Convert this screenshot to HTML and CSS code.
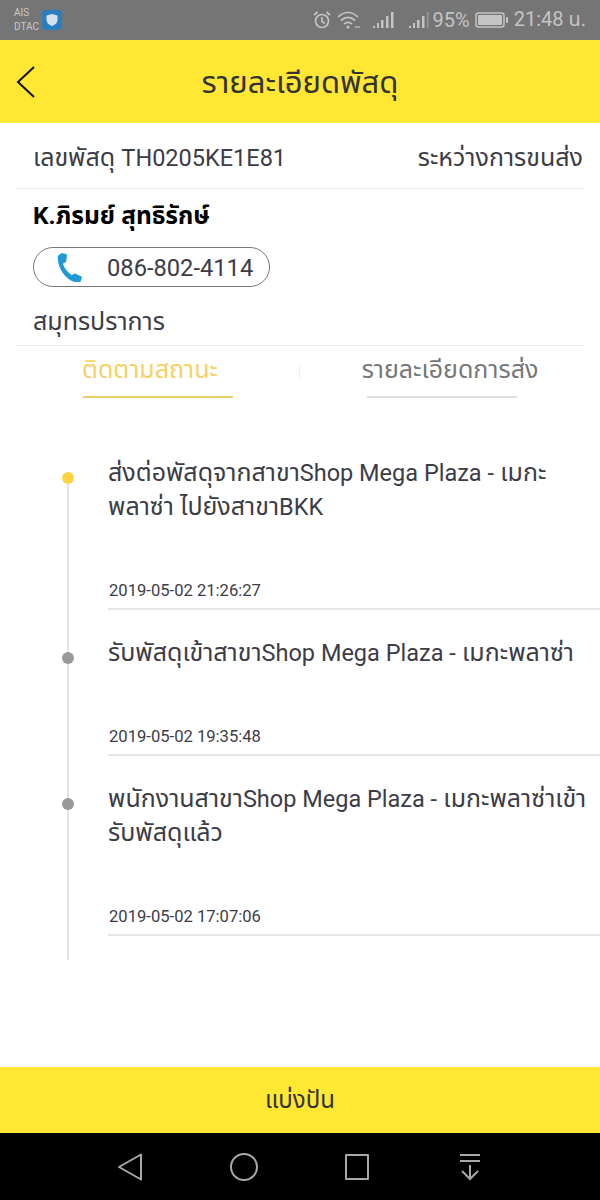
FILE: index.html
```html
<!DOCTYPE html>
<html lang="th">
<head>
<meta charset="utf-8">
<title>รายละเอียดพัสดุ</title>
<link rel="stylesheet" href="styles.css">
</head>
<body>
<div class="page">
  <div class="status">
    <div class="carriers"><span>AIS</span><span>DTAC</span></div>
    <svg class="shield" width="20" height="20" viewBox="0 0 20 20"><rect width="20" height="20" rx="4" fill="#2b7fc0"/><path d="M10 4l5.500 1.500v4.500c0 3-2.500 5-5.500 6-3-1-5.500-3-5.500-6V5.500z" fill="#d5e2ee"/></svg>
    <div class="status-right">
      <svg width="20" height="20" viewBox="0 0 20 20" fill="none" stroke="#c4c4c4" stroke-width="1.700"><circle cx="10" cy="11" r="6.500"/><path d="M10 7v4.500l3 2M2 5l3.500-3M18 5l-3.500-3"/></svg>
      <svg class="wifi" width="24" height="20" viewBox="0 0 24 20" fill="none" stroke="#c4c4c4" stroke-width="1.700"><path d="M1 7c6-6 14-6 20 0M4 10.500c4.500-4 9.500-4 14 0M7 14c2.500-2 5.500-2 8 0"/><circle cx="11" cy="17" r="1.500" fill="#c4c4c4" stroke="none"/><path d="M18 17h5" stroke-width="1.200"/></svg>
      <svg class="sig1" width="21" height="20" viewBox="0 0 21 20" fill="#c4c4c4"><rect x="0" y="16" width="2" height="2"/><rect x="4" y="13" width="2" height="5"/><rect x="8" y="10" width="2.500" height="8"/><rect x="13" y="6" width="2.500" height="12"/><rect x="18" y="2" width="2.500" height="16"/></svg>
      <svg class="sig2" width="20" height="20" viewBox="0 0 20 20" fill="#c4c4c4"><rect x="0" y="16" width="2" height="2"/><rect x="4" y="13" width="2" height="5"/><rect x="8" y="10" width="2.500" height="8"/><rect x="13" y="6" width="2.500" height="12"/><rect x="18" y="2" width="1.500" height="16" fill="#999"/></svg>
      <span class="pct">95%</span>
      <svg class="batt" width="34" height="18" viewBox="0 0 34 18"><rect x="1" y="2" width="28" height="14" rx="2.500" fill="none" stroke="#c4c4c4" stroke-width="1.500"/><rect x="3" y="4" width="24" height="10" rx="1" fill="#c4c4c4"/><rect x="31" y="6" width="2" height="6" rx="1" fill="#c4c4c4"/></svg>
      <span class="clock">21:48 น.</span>
    </div>
  </div>

  <header class="topbar">
    <svg class="back" width="20" height="32" viewBox="0 0 20 32" fill="none" stroke="#111" stroke-width="2"><path d="M18 1L2 16l16 15"/></svg>
    <h1 class="title">รายละเอียดพัสดุ</h1>
  </header>

  <main class="content">
    <div class="parcel-row">
      <span>เลขพัสดุ <span class="lat">TH0205KE1E81</span></span>
      <span>ระหว่างการขนส่ง</span>
    </div>
    <div class="receiver">
      <div class="name">K.ภิรมย์ สุทธิรักษ์</div>
      <div class="phone">
        <svg width="27" height="29" viewBox="3.500 1.500 18.500 21" fill="#1f9ad6"><path d="M6.500 1.500l3 .8c.5.200.8.600.7 1.100l-.6 4.200c-.1.400-.3.700-.7.800l-1.700.9c1 3 3.500 6.300 6.500 8.300l1.700-1.100c.3-.2.700-.2 1 0l4 1.900c.5.200.7.700.6 1.200l-.9 2.500c-.3.700-1 1.100-1.800 1C10.500 22.300 3.500 13.500 3.500 4.700c0-.8.400-1.500 1.100-1.900z"/></svg>
        <span class="phone-num">086-802-4114</span>
      </div>
      <div class="province">สมุทรปราการ</div>
    </div>
    <div class="tabs">
      <div class="tab tab-active"><span class="tab-label">ติดตามสถานะ</span></div>
      <div class="tab tab-idle"><span class="tab-label">รายละเอียดการส่ง</span></div>
    </div>
    <div class="timeline">
      <div class="item">
        <i class="dot dot-active"></i>
        <p class="desc">ส่งต่อพัสดุจากสาขา<span class="lat">Shop Mega Plaza -</span> เมกะ<br>พลาซ่า ไปยังสาขา<span class="lat">BKK</span></p>
        <time class="when">2019-05-02 21:26:27</time>
      </div>
      <div class="item">
        <i class="dot"></i>
        <p class="desc">รับพัสดุเข้าสาขา<span class="lat">Shop Mega Plaza -</span> เมกะพลาซ่า</p>
        <time class="when">2019-05-02 19:35:48</time>
      </div>
      <div class="item">
        <i class="dot"></i>
        <p class="desc">พนักงานสาขา<span class="lat">Shop Mega Plaza -</span> เมกะพลาซ่าเข้า<br>รับพัสดุแล้ว</p>
        <time class="when">2019-05-02 17:07:06</time>
      </div>
    </div>
  </main>

  <div class="share">แบ่งปัน</div>

  <nav class="navbar">
    <svg width="26" height="28" viewBox="0 0 26 28" fill="none" stroke="#a8a8a8" stroke-width="2" stroke-linejoin="round"><path d="M24 1.500v25L2 14z"/></svg>
    <svg width="28" height="28" viewBox="0 0 28 28" fill="none" stroke="#a8a8a8" stroke-width="2"><circle cx="14" cy="14" r="13"/></svg>
    <svg width="26" height="28" viewBox="0 0 26 28" fill="none" stroke="#a8a8a8" stroke-width="2" stroke-linejoin="round"><rect x="1" y="2" width="22" height="24"/></svg>
    <svg width="24" height="28" viewBox="0 0 24 28" fill="none" stroke="#a8a8a8" stroke-width="2"><path d="M2 2h20M2 8h20M12 12v14M4 18l8 8 8-8"/></svg>
  </nav>
</div>
</body>
</html>
```
FILE: styles.css
```css
* { box-sizing: border-box; }
html, body { margin: 0; padding: 0; }
body { font-family: Roboto, "Noto Sans Thai", "Noto Sans", "DejaVu Sans", sans-serif; background: #fff; }
.page { width: 600px; height: 1200px; display: flex; flex-direction: column; overflow: hidden; }
.lat { font-size: 23.500px; }

.status { height: 40px; background: #757575; display: flex; align-items: center; padding-left: 14px; color: #c4c4c4; }
.carriers { display: flex; flex-direction: column; font-size: 10px; line-height: 14px; width: 28px; color: #c9c9c9; }
.shield { margin-top: -1px; }
.status-right { margin-left: auto; display: flex; align-items: center; padding-right: 14px; }
.wifi { margin-left: 5px; }
.sig1 { margin-left: 12px; }
.sig2 { margin-left: 15px; }
.pct { font-size: 20px; margin-left: 4px; }
.batt { margin-left: 5px; }
.clock { font-size: 20px; margin-left: 5px; }

.topbar { height: 83px; background: #ffe733; display: flex; align-items: center; justify-content: center; position: relative; margin-bottom: 1px; padding-top: 3px; }
.back { position: absolute; left: 16px; top: 26px; }
.title { margin: 0; font-size: 31px; font-weight: 400; color: #333; }

.content { flex: 1; }
.parcel-row { margin: 0 16px; height: 65px; padding: 3px 1px 0 17px; border-bottom: 1px solid #eee; display: flex; justify-content: space-between; align-items: center; font-size: 25px; color: #3c3c46; }
.receiver { margin: 0 16px; padding: 0 0 0 17px; height: 157px; border-bottom: 1px solid #eee; display: flex; flex-direction: column; align-items: flex-start; }
.name { font-size: 24.500px; font-weight: 700; color: #000; height: 58px; line-height: 54px; }
.phone { width: 237px; height: 40px; border: 1px solid #777; border-radius: 20px; display: flex; align-items: center; padding-left: 23px; gap: 23px; font-size: 23.700px; color: #3c3c46; }
.phone-num { padding-top: 2px; }
.province { font-size: 25px; color: #3c3c46; margin-top: 18px; line-height: 34px; }

.tabs { height: 52px; display: flex; position: relative; }
.tab { flex: 1; display: flex; justify-content: center; align-items: center; position: relative; font-size: 25px; padding-bottom: 4px; }
.tab::after { content: ""; position: absolute; bottom: 0; width: 150px; height: 2px; }
.tab-active { color: #f5d263; }
.tab-active::after { background: #f0cf60; left: 83px; }
.tab-idle { color: #777; }
.tab-idle::after { background: #ddd; left: 67px; }
.tab-idle::before { content: ""; position: absolute; left: -1px; top: 18px; width: 1px; height: 16px; background: #eee; }

.timeline { padding: 32px 0 24px 108px; position: relative; }
.timeline::before { content: ""; position: absolute; left: 67px; top: 81px; bottom: 0; width: 2px; background: #e2e2e2; }
.item { padding-top: 26px; padding-bottom: 7px; border-bottom: 2px solid #e6e6e6; position: relative; }
.dot { position: absolute; left: -46.500px; top: 42px; width: 12px; height: 12px; border-radius: 50%; background: #999; }
.dot-active { background: #ffd242; }
.desc { margin: 0 0 57px; font-size: 25px; line-height: 34px; color: #3c3c46; white-space: nowrap; }
.when { display: block; font-size: 16.600px; line-height: 20px; color: #3c3c46; padding-left: 1px; }

.share { height: 66px; background: #ffe733; display: flex; align-items: center; justify-content: center; font-size: 24px; color: #333; padding-top: 2px; }
.navbar { height: 67px; background: #000; display: flex; align-items: center; padding: 0 118px 0 117px; justify-content: space-between; }
```
